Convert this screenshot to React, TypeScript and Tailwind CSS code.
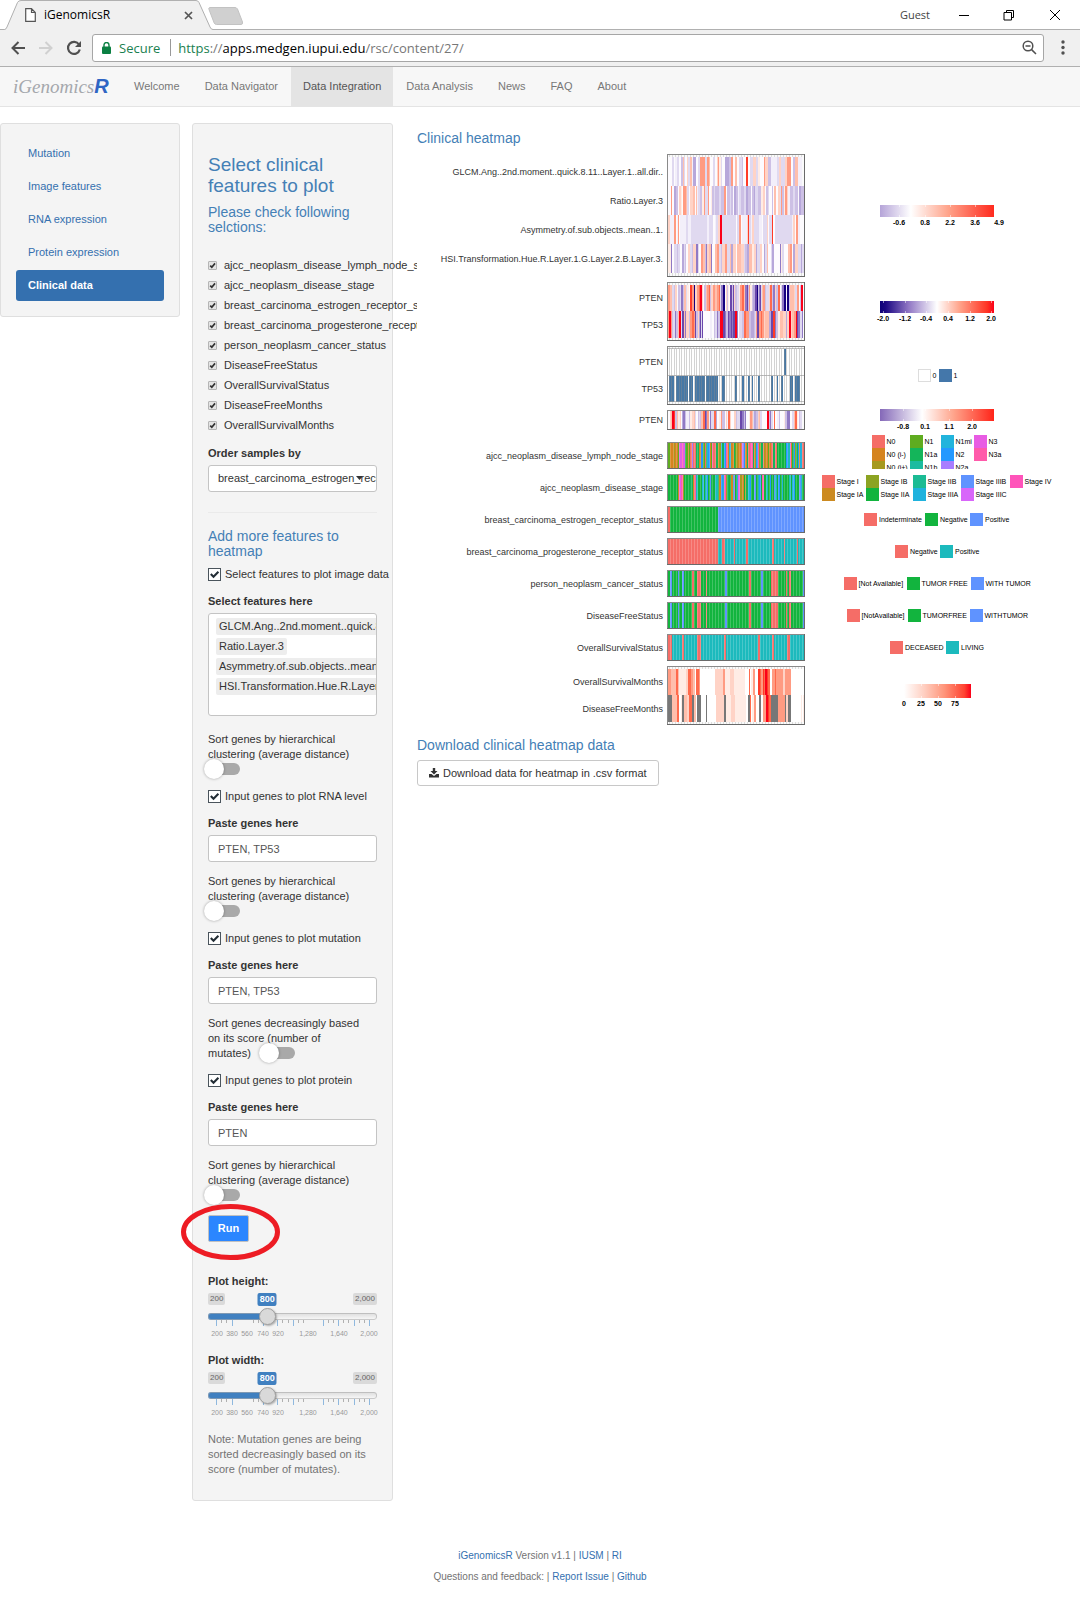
import React from "react";

/* ---------- heatmap data: colour key followed by a run length ---------- */

const COLORS: Record<string, string> = {
  W: "#fdfbfe", l: "#f3effa", L: "#e0d9f0", P: "#cdc0e5", Q: "#b7a7da",
  D: "#9079c4", E: "#6a47ab", N: "#150080", o: "#ffece5", O: "#ffd3c6",
  S: "#ffbfac", T: "#ff9b82", U: "#ff6a4c", R: "#ff3b28", X: "#fb0019",
  w: "#ffffff", H: "#777777", B: "#4678a6", s: "#e9e9e9",
  r: "#f56d67", a: "#d5841f", k: "#a69a20", g: "#5fac20", G: "#12b43e",
  e: "#14b55a", t: "#1cbabd", c: "#22b4dc", b: "#2499ff", v: "#5f93ff",
  m: "#e45fe3", p: "#ff5aaa", u: "#a87dff",
};

type Band = { data: string; y: number; h: number };
const W = 136;

function runs(data: string) {
  const out: { color: string; x: number; w: number }[] = [];
  let x = 0;
  for (const part of data.match(/[A-Za-z]\d+/g) ?? []) {
    const w = Math.min(Number(part.slice(1)), W - x);
    if (w > 0) out.push({ color: COLORS[part[0]], x, w });
    x += w;
  }
  return out;
}

function Heatmap({ bands, height, stripes }: { bands: Band[]; height: number; stripes?: "light" | "grey" }) {
  const inset = bands[0].y > 0;
  return (
    <svg width={138} height={height} shapeRendering="crispEdges" className="block shrink-0">
      <rect width="138" height={height} fill="#fafafa" />
      {inset &&
        Array.from({ length: 45 }, (_, i) => (
          <rect key={i} x={2 + i * 3} y="1" width="1" height={height - 2} fill="#dddddd" />
        ))}
      {bands.map((band, i) => (
        <g key={i}>
          {runs(band.data).map((r, j) => (
            <rect key={j} x={1 + r.x} y={band.y} width={r.w} height={band.h} fill={r.color} />
          ))}
        </g>
      ))}
      {stripes === "light" &&
        Array.from({ length: 45 }, (_, i) => (
          <rect key={i} x={3 + i * 3} y="1" width="1" height={height - 2} fill="#ffffff" fillOpacity="0.2" />
        ))}
      {stripes === "grey" && (
        <>
          {Array.from({ length: 54 }, (_, i) => (
            <rect key={i} x={2 + Math.floor(i * 2.5)} y="3" width="1" height={height - 6} fill="#8c8c8c" fillOpacity="0.38" />
          ))}
          <path d={`M1 2.5H137M1 29.5H137M1 ${height - 3.5}H137`} stroke="#999" strokeOpacity="0.6" />
        </>
      )}
      <path d={`M0.5 ${height}V0.5H137`} fill="none" stroke="#8a8a8a" />
      <path d={`M0 ${height - 0.5}H137.5V0`} fill="none" stroke="#6a6a6a" />
    </svg>
  );
}

const status =
  "G2v2G6v1G3v2G8r2G3r4G5r1G18v2G22r2G10v2G8r7G8r1G2r2G12v1G4";
const estrogen = "r2G48v86";
const survival = "r4t10r2t13r4t23r2t32r2t12r2t13r3t15";

const tracks: {
  labels: string[];
  height: number;
  bands: Band[];
  stripes?: "light" | "grey";
  legend: React.ReactNode;
  gap?: boolean;
}[] = [
  {
    labels: [
      "GLCM.Ang..2nd.moment..quick.8.11..Layer.1..all.dir..",
      "Ratio.Layer.3",
      "Asymmetry.of.sub.objects..mean..1.",
      "HSI.Transformation.Hue.R.Layer.1.G.Layer.2.B.Layer.3.",
    ],
    height: 123,
    bands: [
      { y: 3, h: 29, data: "W4L2W1l2L2W2P2S1L1W2O1L2S2l1Q3W2L2T5L2T2S1W3L2W2O1T1o2L1W3Q4P2T2W2S2W2L3P1W3R2W2L3O3L2o2W4T1O3P3l6L2O2L4O2T4W2P2S3l4" },
      { y: 32, h: 29, data: "W3T1W2Q2P2W1O2o1W1T3S1L2W1O3S2W1S1l1L2P2o2T1L3T1W2o1P2L1P4L2P3T2W1P3L1P2W1Q2P2l1L2P3L2Q2P3W1P2Q1L3P3o2O2W1P2L1W3P1W1S2W2O2L1T1P2o1T2O1l2P3L2P3W1Q2P3L1S2W2P3L2o1S1P2L2" },
      { y: 61, h: 29, data: "O2l4T2W1l1T1W1l6L2l3L16l2L4W2l1L2O2X2L14W1L2T2W1l5O1R1L2l1O2L5l3W1L4O1W1L3R1W2L17l1O2W1T2l2W4" },
      { y: 90, h: 29, data: "o3D1W2L3P1L2W2Q2L1P1W2O2L2P1O3D2L1W2T2S2P1D1O2S2D1W3S2T2L2P1O3T2L3S1Q2O3W1S4O3L1P2Q2S3o2O2Q1L3O2W2Q1L2S1W3L1Q2W6D1o1L2W4S2T2W1Q2O3L3Q1L2O3" },
    ],
    legend: (
      <Gradient id="g1" width={114} barHeight={12} stops={[["0", "#b5a4d8"], ["0.27", "#ffffff"], ["0.6", "#ffa38a"], ["1", "#ff2a1e"]]}
        ticks={[[19, "-0.6"], [45, "0.8"], [70, "2.2"], [95, "3.6"], [119, "4.9"]]} />
    ),
  },
  {
    labels: ["PTEN", "TP53"],
    height: 59,
    bands: [
      { y: 3, h: 26, data: "T2S2L2P1O2W1P2L1D2P1S2L1o2W1R2T2N1O2T2U1X2O1W1P2S1T2U1P1O2T2S2T2U1L1D2N2W1O1P1o1W1E2P1E1O1P2L2o1T2U2S1D2E1P1T1o2P1Q2E2N1P1D1E1L1S1T2P1L3O1U2P1D2O1P2U2W1L1D2N2W1N2P1S4O1L2T2W1P1X2" },
      { y: 29, h: 27, data: "T1X2T1P1L2D1P2S1X2L1E2S1D1O3P1T2U2T1E1P2O1Q1E1L1E1W7l2W2P1L2D1P2X3E2D1P2E1D2E1D1E2X2D1W1L3P2U2T3P2Q3P1L1T1E2T2U1T2O1S4Q2E2R2D1P2o2S3O3Q1O2X2O1S2T2X1E1D2L2D1W2Q1O2P1Q2D2" },
    ],
    legend: (
      <Gradient id="g2" width={114} barHeight={12} stops={[["0", "#0d0078"], ["0.05", "#1c0883"], ["0.25", "#9076c4"], ["0.5", "#ffffff"], ["0.7", "#ffa38a"], ["0.94", "#ff3424"], ["1", "#fb0019"]]}
        ticks={[[3, "-2.0"], [25, "-1.2"], [46, "-0.4"], [68, "0.4"], [90, "1.2"], [111, "2.0"]]} />
    ),
  },
  {
    labels: ["PTEN", "TP53"],
    height: 59,
    stripes: "grey",
    bands: [
      { y: 3, h: 26, data: "w116B2w19" },
      { y: 30, h: 26, data: "w1B5w2B12w1B4w2B10w1B12w4B3w10B2w5B2w4B2w2B1w5B2w11B2w4B1w3B2w7B3w2B5w7" },
    ],
    legend: <Swatches columns="grid-cols-[21px_18px]" items={[["#ffffff", "0"], ["#4477aa", "1"]]} />,
  },
  {
    labels: ["PTEN"],
    height: 20,
    gap: true,
    bands: [
      { y: 1, h: 18, data: "W2O1S1X2R1P2S1o2O1W1Q1D2P1l3P1o2O2S1L1W2P1L1P1S2U2E1D1T2l1D1L3U2Q1W2o2T1P3W1O1l1U2O1W3O2P1L3E2D2P1D1W3o1T2S1L1Q2P2O1S1L2W5X2P1D1L2W1U1W2l2P1W4o1P2D3W2L2S1U2o1W1P1L2" },
    ],
    legend: (
      <Gradient id="g3" width={114} barHeight={12} stops={[["0", "#8468b8"], ["0.37", "#ffffff"], ["0.65", "#ffa38a"], ["1", "#ff2419"]]}
        ticks={[[23, "-0.8"], [45, "0.1"], [69, "1.1"], [92, "2.0"]]} />
    ),
  },
  {
    labels: ["ajcc_neoplasm_disease_lymph_node_stage"],
    height: 27,
    stripes: "light",
    bands: [
      { y: 1, h: 25, data: "g2a4k1a3g1m3p1m2e1g2a1g1r2u1r3e3a2b2g2r1e1c1b2a1g1p1r3e2a1k2c1e2b2p1r1a1c2a3e1g1k2a3r1u2b1a2e1r2p3e1a1k1b2p1k2e2r1k1a3g1a2r2e2r2G9b2t2m1a1e2b1k1e2b1a1c2r2e1b2r2p3m2" },
    ],
    legend: (
      <div className="-mt-[7px] h-[34px] overflow-hidden">
        <Swatches
          columns="grid-cols-[38px_31px_33px_29px]"
          items={[
            ["#f56d67", "N0"], ["#5fac20", "N1"], ["#22b4dc", "N1mi"], ["#e85ce3", "N3"],
            ["#d5841f", "N0 (i-)"], ["#14b55a", "N1a"], ["#2499ff", "N2"], ["#ff5aaa", "N3a"],
            ["#a69a20", "N0 (i+)"], ["#1bbba0", "N1b"], ["#a87dff", "N2a"],
          ]}
        />
      </div>
    ),
  },
  {
    labels: ["ajcc_neoplasm_disease_stage"],
    height: 27,
    stripes: "light",
    bands: [
      { y: 1, h: 25, data: "G10a1m2p2k1G6e3a1r1p1t2G4c2G1t2b1G2v1e1G3t3G1a2b2c1p2k1e2G2a2t1u1G2c1m2k2a2G1k1e2c2b1G3v2G2t1b2G1p2G2t2G2b1G3v1t2G1b2G2c1G6t2G1c2b1G4v2c1G2u1r1a1G1t2p2m1" },
    ],
    legend: (
      <Swatches
        columns="grid-cols-[44px_47px_48px_49px_43px]"
        items={[
          ["#f56d67", "Stage I"], ["#8ca322", "Stage IB"], ["#1bbb94", "Stage IIB"], ["#5f93ff", "Stage IIIB"], ["#ff54ba", "Stage IV"],
          ["#cc8a20", "Stage IA"], ["#12b43e", "Stage IIA"], ["#1fb2dd", "Stage IIIA"], ["#d866fa", "Stage IIIC"],
        ]}
      />
    ),
  },
  {
    labels: ["breast_carcinoma_estrogen_receptor_status"],
    height: 27,
    stripes: "light",
    bands: [{ y: 1, h: 25, data: estrogen }],
    legend: <Swatches columns="grid-cols-[61px_45px_40px]" items={[["#f56d67", "Indeterminate"], ["#12b43e", "Negative"], ["#5f93ff", "Positive"]]} />,
  },
  {
    labels: ["breast_carcinoma_progesterone_receptor_status"],
    height: 27,
    stripes: "light",
    bands: [{ y: 1, h: 25, data: "r50t4r3t9r1t11r2t24r2t10r1t12r1t7" }],
    legend: <Swatches columns="grid-cols-[45px_39px]" items={[["#f56d67", "Negative"], ["#1cbabd", "Positive"]]} />,
  },
  {
    labels: ["person_neoplasm_cancer_status"],
    height: 27,
    stripes: "light",
    bands: [{ y: 1, h: 25, data: status }],
    legend: <Swatches columns="grid-cols-[63px_64px_60px]" items={[["#f56d67", "[Not Available]"], ["#12b43e", "TUMOR FREE"], ["#5f93ff", "WITH TUMOR"]]} />,
  },
  {
    labels: ["DiseaseFreeStatus"],
    height: 27,
    stripes: "light",
    bands: [{ y: 1, h: 25, data: status }],
    legend: <Swatches columns="grid-cols-[61px_62px_58px]" items={[["#f56d67", "[NotAvailable]"], ["#12b43e", "TUMORFREE"], ["#5f93ff", "WITHTUMOR"]]} />,
  },
  {
    labels: ["OverallSurvivalStatus"],
    height: 27,
    stripes: "light",
    bands: [{ y: 1, h: 25, data: survival }],
    legend: <Swatches columns="grid-cols-[56px_38px]" items={[["#f56d67", "DECEASED"], ["#1cbabd", "LIVING"]]} />,
  },
  {
    labels: ["OverallSurvivalMonths", "DiseaseFreeMonths"],
    height: 59,
    bands: [
      { y: 3, h: 26, data: "T3S5U2S1o7O2U3T2S2w1U3T1w15O8T2o5O4o11w4U1w1o2T2w3R2U1T2R1U1X2R1U2w2T3U1T7O2T6w9w7" },
      { y: 29, h: 27, data: "H4S5U2w2o1H2S3O2U3H2S2w1H4w5H1w9O8H2o5O4o11w2H2U1w1o2T2w3H2w2T3X2R1U2H7T7H1O2H3w10o1w1o5" },
    ],
    legend: (
      <Gradient id="g4" width={67} barHeight={14} stops={[["0", "#ffffff"], ["0.3", "#ffcfc1"], ["0.6", "#ff957a"], ["0.9", "#ff4432"], ["1", "#fb0019"]]}
        ticks={[[0, "0"], [17, "25"], [34, "50"], [51, "75"]]} />
    ),
  },
];

function Gradient({ id, width, barHeight, stops, ticks }: { id: string; width: number; barHeight: number; stops: [string, string][]; ticks: [number, string][] }) {
  return (
    <svg width={width} height={barHeight + 10} className="-my-1 overflow-visible">
      <defs>
        <linearGradient id={id}>
          {stops.map(([o, c]) => <stop key={o} offset={o} stopColor={c} />)}
        </linearGradient>
      </defs>
      <rect width={width} height={barHeight} fill={`url(#${id})`} />
      {ticks.map(([x, t]) => (
        <g key={t}>
          {x < width && <path d={`M${x + 0.5} 0v2M${x + 0.5} ${barHeight - 2}v2`} stroke="#fff" strokeOpacity="0.5" />}
          <text x={x} y={barHeight + 8} textAnchor="middle" className="fill-black text-[7px] font-bold">{t}</text>
        </g>
      ))}
    </svg>
  );
}

function Swatches({ columns, items }: { columns: string; items: [string, string][] }) {
  return (
    <ul className={`grid ${columns}`}>
      {items.map(([color, label]) => (
        <li key={label} className="flex items-center gap-0.5 text-[7px] leading-[13px] font-medium whitespace-nowrap text-black">
          <span className={`h-[13px] w-[13px] shrink-0 ${color === "#ffffff" ? "border border-[#dddddd]" : ""}`} style={{ backgroundColor: color }} />
          {label}
        </li>
      ))}
    </ul>
  );
}

/* ---------- form controls ---------- */

function SmallCheck({ label }: { label: string }) {
  return (
    <label className="flex h-5 items-center gap-[7px] whitespace-nowrap">
      <span className="relative h-[9px] w-[9px]">
        <input type="checkbox" defaultChecked className="block h-[9px] w-[9px] appearance-none rounded-[1px] border border-[#b5b5b5] bg-[#e4e4e4]" />
        <svg viewBox="0 0 9 9" className="pointer-events-none absolute inset-0 h-[9px] w-[9px]">
          <path d="M2.2 4.6 3.8 6.2 7 2.4" fill="none" stroke="#333" strokeWidth="1.7" />
        </svg>
      </span>
      {label}
    </label>
  );
}

function BigCheck({ label }: { label: string }) {
  return (
    <label className="flex h-[15px] items-center gap-1 whitespace-nowrap">
      <span className="relative h-[13px] w-[13px]">
        <input type="checkbox" defaultChecked className="block h-[13px] w-[13px] appearance-none border border-[#4a545c] bg-white" />
        <svg viewBox="0 0 13 13" className="pointer-events-none absolute inset-0 h-[13px] w-[13px]">
          <path d="M2.8 6 5.5 8.7 10.4 3.8" fill="none" stroke="#222d35" strokeWidth="2.1" />
        </svg>
      </span>
      {label}
    </label>
  );
}

function Toggle({ label }: { label: string }) {
  return (
    <input
      type="checkbox"
      role="switch"
      aria-label={label}
      className="relative inline-block h-3 w-8 appearance-none rounded-full bg-[#a9a9a9] align-[-2px] before:absolute before:-top-1 before:-left-1 before:h-5 before:w-5 before:rounded-full before:bg-white before:shadow-[0_0_3px_rgba(0,0,0,0.35)]"
    />
  );
}

function SortToggle() {
  return (
    <div className="mt-3">
      <p>Sort genes by hierarchical clustering (average distance)</p>
      <div className="flex h-[15px] items-center pb-0.5">
        <Toggle label="Sort genes by hierarchical clustering" />
      </div>
    </div>
  );
}

function GeneInput({ id, value }: { id: string; value: string }) {
  return (
    <>
      <label htmlFor={id} className="mt-3 block font-bold">Paste genes here</label>
      <input id={id} type="text" defaultValue={value} className="mt-1 block h-[27px] w-full rounded-[3px] border border-[#c4c4c4] bg-white px-[9px] text-[#555]" />
    </>
  );
}

const longTicks = [8, 24, 55, 69, 85, 115, 130, 146, 161];
const shortTicks = [13, 18, 45, 50, 74, 80, 90, 95, 120, 125, 135, 140, 151, 156];
const tickLabels: [number, string][] = [[9, "200"], [24, "380"], [39, "560"], [55, "740"], [70, "920"], [100, "1,280"], [131, "1,640"], [161, "2,000"]];

function PlotSlider({ id, label }: { id: string; label: string }) {
  return (
    <div>
      <label htmlFor={id} className="block font-bold">{label}</label>
      <div className="relative mt-1 flex justify-between text-[8px] leading-3 text-[#666]">
        <span className="h-3 rounded-[2px] bg-[#dadada] px-[2px]">200</span>
        <output className="absolute left-[35%] h-[13px] -translate-x-1/2 rounded-[2px] bg-[#4080c0] px-[2px] text-[9px] leading-[13px] font-bold text-white">800</output>
        <span className="h-3 rounded-[2px] bg-[#dadada] px-[2px]">2,000</span>
      </div>
      <input
        id={id}
        type="range"
        min={200}
        max={2000}
        defaultValue={800}
        className="relative z-10 mt-[3px] block h-[17px] w-full appearance-none bg-transparent [&::-webkit-slider-runnable-track]:h-[7px] [&::-webkit-slider-runnable-track]:rounded-[3px] [&::-webkit-slider-runnable-track]:bg-[linear-gradient(90deg,#4080c0_35%,transparent_35%),linear-gradient(#dcdcdc,#fafafa)] [&::-webkit-slider-runnable-track]:shadow-[inset_0_0_0_1px_rgba(170,170,170,0.6)] [&::-webkit-slider-thumb]:mt-[-5px] [&::-webkit-slider-thumb]:h-[17px] [&::-webkit-slider-thumb]:w-[17px] [&::-webkit-slider-thumb]:appearance-none [&::-webkit-slider-thumb]:rounded-full [&::-webkit-slider-thumb]:border [&::-webkit-slider-thumb]:border-[#a0a0a0] [&::-webkit-slider-thumb]:bg-[#d9d9d9] [&::-webkit-slider-thumb]:shadow-[1px_1px_2px_rgba(0,0,0,0.3)]"
      />
      <svg viewBox="0 0 169 17" className="pointer-events-none -mt-[5px] block w-full overflow-visible">
        {longTicks.map((x) => <path key={x} d={`M${x + 0.5} 0v6`} stroke="#8fb8de" />)}
        {shortTicks.map((x) => <path key={x} d={`M${x + 0.5} 0v3`} stroke="#b0b0b0" />)}
        {tickLabels.map(([x, t]) => (
          <text key={t} x={x} y="16" textAnchor="middle" className="fill-[#999] text-[7px]">{t}</text>
        ))}
      </svg>
    </div>
  );
}

/* ---------- page ---------- */

const navItems = ["Welcome", "Data Navigator", "Data Integration", "Data Analysis", "News", "FAQ", "About"];
const sideItems = ["Mutation", "Image features", "RNA expression", "Protein expression", "Clinical data"];
const clinicalFeatures = [
  "ajcc_neoplasm_disease_lymph_node_stage",
  "ajcc_neoplasm_disease_stage",
  "breast_carcinoma_estrogen_receptor_status",
  "breast_carcinoma_progesterone_receptor_status",
  "person_neoplasm_cancer_status",
  "DiseaseFreeStatus",
  "OverallSurvivalStatus",
  "DiseaseFreeMonths",
  "OverallSurvivalMonths",
];
const imageFeatures = [
  "GLCM.Ang..2nd.moment..quick.8.11..Layer.1",
  "Ratio.Layer.3",
  "Asymmetry.of.sub.objects..mean..1.",
  "HSI.Transformation.Hue.R.Layer.1.G.Layer.2",
];

function BrowserBar() {
  return (
    <header className="font-['Open_Sans','Noto_Sans',sans-serif]">
      <div className="flex h-[30px] items-end border-b border-[#b0b0b0] bg-white">
        <div className="relative -mb-px flex h-[30px] w-[218px] items-center pl-[25px]">
          <svg width="218" height="30" className="absolute inset-0">
            <path d="M0 29.5H4.5Q6 29.5 7 27L17.5 2.5Q18.5 .5 21 .5H196Q198 .5 199 2.5L210 27Q211 29.5 213 29.5H218V30H0Z" fill="#f0f0f0" />
            <path d="M0 29.5H4.5Q6 29.5 7 27L17.5 2.5Q18.5 .5 21 .5H196Q198 .5 199 2.5L210 27Q211 29.5 213 29.5H218" fill="none" stroke="#b0b0b0" />
          </svg>
          <svg width="11" height="14" viewBox="0 0 11 14" className="relative">
            <path d="M.7.7H6.5L10.3 4.5V13.3H.7ZM6.5.7V4.5H10.3" fill="#fff" stroke="#555" strokeWidth="1.2" />
          </svg>
          <h1 className="relative ml-2 text-xs leading-4 text-black">iGenomicsR</h1>
          <button aria-label="Close tab" className="absolute top-[11px] left-[184px]">
            <svg width="9" height="9" viewBox="0 0 9 9"><path d="M1 1 8 8M8 1 1 8" stroke="#555" strokeWidth="1.7" /></svg>
          </button>
        </div>
        <button aria-label="New tab" className="mb-1 -ml-[10px]">
          <svg width="36" height="18" viewBox="0 0 36 18"><path d="M1.5 .5H27Q28.5 .5 29.5 2L34.5 15Q35 17.5 33 17.5H8.5Q7 17.5 6.2 16L1 2.5Q.5 .5 1.5 .5Z" fill="#d0d0d0" stroke="#c2c2c2" /></svg>
        </button>
        <div className="ml-auto flex items-center self-center">
          <span className="text-[11px] leading-4 text-[#444]">Guest</span>
          <button aria-label="Minimize" className="ml-[28px]"><svg width="12" height="12"><path d="M1 6.5H11" stroke="#000" /></svg></button>
          <button aria-label="Restore" className="ml-[33px]">
            <svg width="12" height="12" fill="none" stroke="#000"><path d="M1 3.5H8.5V11H1ZM3.5 3.5V1.5H10.5V8.5H8.5" /></svg>
          </button>
          <button aria-label="Close" className="mr-[19px] ml-[34px]"><svg width="12" height="12"><path d="M1 1 11 11M11 1 1 11" stroke="#000" /></svg></button>
        </div>
      </div>
      <div className="flex h-[37px] items-center border-b border-[#b0b0b0] bg-[#f0f0f0] pb-px pl-[11px]">
        <button aria-label="Back"><svg width="14" height="14" viewBox="0 0 14 14" fill="none" stroke="#505050" strokeWidth="2"><path d="M14 7H1.5M7.5 1 1.5 7 7.5 13" /></svg></button>
        <button aria-label="Forward" className="ml-[14px]"><svg width="14" height="14" viewBox="0 0 14 14" fill="none" stroke="#d0d0d0" strokeWidth="2"><path d="M0 7H12.5M6.5 1 12.5 7 6.5 13" /></svg></button>
        <button aria-label="Reload" className="ml-[13px]">
          <svg width="16" height="16" viewBox="0 0 16 16"><path d="M13 4.5A6 6 0 1 0 13.8 9.5" fill="none" stroke="#505050" strokeWidth="2.2" /><path d="M15 1V7H9Z" fill="#505050" /></svg>
        </button>
        <div className="ml-[10px] flex h-[28px] flex-1 items-center rounded-[3px] border border-[#a6a6a6] bg-white pr-[6px] pl-[9px] text-[13px] leading-[18px]">
          <svg width="9" height="12" viewBox="0 0 9 12"><rect x="0" y="4.5" width="9" height="7.5" rx="1" fill="#0b8043" /><path d="M2 5V3a2.5 2.5 0 0 1 5 0V5" fill="none" stroke="#0b8043" strokeWidth="1.4" /></svg>
          <span className="ml-2 text-[#1a7f50]">Secure</span>
          <span className="ml-[10px] h-[17px] w-px bg-[#999]" />
          <span className="ml-[7px] text-[#777]"><span className="text-[#1a7f50]">https</span>://<span className="text-black">apps.medgen.iupui.edu</span>/rsc/content/27/</span>
          <svg width="15" height="15" viewBox="0 0 15 15" fill="none" stroke="#505050" strokeWidth="1.5" className="ml-auto"><circle cx="6" cy="6" r="4.8" /><path d="M3.5 6H8.5M9.6 9.6 14 14" /></svg>
        </div>
        <button aria-label="Menu" className="mr-[15px] ml-[17px]">
          <svg width="4" height="15" fill="#505050"><circle cx="2" cy="2" r="1.7" /><circle cx="2" cy="7.5" r="1.7" /><circle cx="2" cy="13" r="1.7" /></svg>
        </button>
      </div>
    </header>
  );
}

export default function App() {
  return (
    <div className="min-h-screen bg-white font-['Liberation_Sans',Arial,sans-serif] text-[11px] leading-[15px] text-[#333]">
      <BrowserBar />

      <nav className="flex h-10 items-stretch gap-px border-b border-[#e4e4e4] bg-[#f7f7f7]">
        <a href="#home" className="flex w-[121px] items-center pl-[13px] whitespace-nowrap">
          <span className="font-['Liberation_Serif',serif] text-[19px] text-[#a5a8ad] italic">iGenomics</span>
          <span className="text-[20px] font-bold text-[#2f66c4] italic">R</span>
        </a>
        {navItems.map((item) => (
          <a key={item} href="#nav" className={`flex items-center px-3 ${item === "Data Integration" ? "bg-[#e4e4e4] text-[#555]" : "text-[#777]"}`}>
            {item}
          </a>
        ))}
      </nav>

      <div className="mt-4 flex items-stretch">
        <aside className="w-1/6 shrink-0 self-start rounded-[3px] border border-[#dfdfdf] bg-[#f4f4f4] px-[15px] pt-[14px] pb-[15px]">
          <ul className="flex flex-col gap-[2px]">
            {sideItems.map((item) => (
              <li key={item}>
                <a href="#section" className={`flex h-[31px] items-center rounded-[3px] px-3 ${item === "Clinical data" ? "bg-[#3470af] font-bold text-white" : "text-[#3470af]"}`}>
                  {item}
                </a>
              </li>
            ))}
          </ul>
        </aside>

        <form className="ml-3 w-[201px] shrink-0 self-start rounded-[3px] border border-[#dfdfdf] bg-[#f4f4f4] px-[15px] pt-[30px] pb-[23px]">
          <h3 className="text-[19px] leading-[21px] text-[#4480b6]">Select clinical features to plot</h3>
          <h4 className="mt-[9px] text-sm leading-[15px] text-[#4480b6]">Please check following selctions:</h4>
          <div className="mt-5">
            {clinicalFeatures.map((f) => <SmallCheck key={f} label={f} />)}
          </div>

          <label htmlFor="order" className="mt-[11px] block font-bold">Order samples by</label>
          <div className="relative mt-1">
            <select id="order" className="block h-[27px] w-full appearance-none overflow-hidden rounded-[3px] border border-[#c4c4c4] bg-white pl-[9px] text-[#333]">
              <option>breast_carcinoma_estrogen_receptor_status</option>
            </select>
            <svg width="7" height="4" className="pointer-events-none absolute top-[11px] right-[14px]"><path d="M0 0H7L3.5 4Z" fill="#333" /></svg>
          </div>

          <hr className="mt-5 border-[#eaeaea]" />

          <h4 className="mt-4 text-sm leading-[15px] text-[#4480b6]">Add more features to heatmap</h4>
          <div className="mt-2"><BigCheck label="Select features to plot image data" /></div>
          <p id="features-label" className="mt-3 font-bold">Select features here</p>
          <ul aria-labelledby="features-label" className="mt-1 flex h-[103px] flex-col items-start gap-[3px] overflow-hidden rounded-[3px] border border-[#c4c4c4] bg-white pt-1 pl-[7px]">
            {imageFeatures.map((f) => (
              <li key={f} className="h-[17px] rounded-[2px] bg-[#ededed] px-[3px] leading-[17px] whitespace-nowrap">{f}</li>
            ))}
          </ul>
          <div className="pt-1"><SortToggle /></div>

          <div className="mt-3"><BigCheck label="Input genes to plot RNA level" /></div>
          <GeneInput id="rna" value="PTEN, TP53" />
          <SortToggle />

          <div className="mt-3"><BigCheck label="Input genes to plot mutation" /></div>
          <GeneInput id="mutation" value="PTEN, TP53" />
          <p className="mt-3 h-[45px] pr-[14px]">
            Sort genes decreasingly based on its score (number of mutates) <span className="ml-[9px]"><Toggle label="Sort genes decreasingly" /></span>
          </p>

          <div className="mt-3"><BigCheck label="Input genes to plot protein" /></div>
          <GeneInput id="protein" value="PTEN" />
          <SortToggle />

          <div className="relative mt-3">
            <button type="button" className="block h-[27px] w-[41px] rounded-[2px] border border-[#c0c0c0] bg-[#2b86ff] font-bold text-white">Run</button>
            <svg width="102" height="57" className="pointer-events-none absolute -top-[11px] -left-[28px]">
              <ellipse cx="50.5" cy="28" rx="47" ry="25.5" fill="none" stroke="#ed1c24" strokeWidth="5" />
            </svg>
          </div>

          <div className="mt-8"><PlotSlider id="height" label="Plot height:" /></div>
          <div className="mt-4"><PlotSlider id="width" label="Plot width:" /></div>

          <p className="mt-4 text-[#737373]">Note: Mutation genes are being sorted decreasingly based on its score (number of mutates).</p>
        </form>

        <main className="relative ml-6 flex-1 bg-white pt-2 pr-[11px]">
          <h4 className="text-sm leading-[15px] text-[#4480b6]">Clinical heatmap</h4>
          <div className="mt-2 flex flex-col gap-[5px]">
            {tracks.map((t, i) => (
              <div key={i} className={t.gap ? "mb-[7px] flex" : "flex"}>
                <div className={`flex w-[246px] shrink-0 flex-col justify-around text-right text-[9px] leading-3 whitespace-nowrap text-[#333] ${t.height > 27 ? "py-[3px]" : ""}`}>
                  {t.labels.map((l) => <span key={l}>{l}</span>)}
                </div>
                <div className="ml-1"><Heatmap bands={t.bands} height={t.height} stripes={t.stripes} /></div>
                <div className="flex flex-1 items-center justify-center">{t.legend}</div>
              </div>
            ))}
          </div>
          <h4 className="mt-[13px] text-sm leading-[15px] text-[#4480b6]">Download clinical heatmap data</h4>
          <button type="button" className="mt-[7px] flex h-[26px] items-center gap-1 rounded-[3px] border border-[#c8c8c8] bg-white px-[11px] text-[#333]">
            <svg width="10" height="10" viewBox="0 0 10 10" fill="#333"><path d="M3.8 0H6.2V3H8.5L5 6.5 1.5 3H3.8ZM0 6H2.5L5 8 7.5 6H10V9.5H0Z" /></svg>
            Download data for heatmap in .csv format
          </button>
        </main>
      </div>

      <footer className="mt-[47px] flex flex-col items-center gap-[6px] pb-[19px] text-[10px] leading-[15px] text-[#737373]">
        <p><a href="#app" className="text-[#3470af]">iGenomicsR</a> Version v1.1 | <a href="#iusm" className="text-[#3470af]">IUSM</a> | <a href="#ri" className="text-[#3470af]">RI</a></p>
        <p>Questions and feedback: | <a href="#issue" className="text-[#3470af]">Report Issue</a> | <a href="#github" className="text-[#3470af]">Github</a></p>
      </footer>
    </div>
  );
}
